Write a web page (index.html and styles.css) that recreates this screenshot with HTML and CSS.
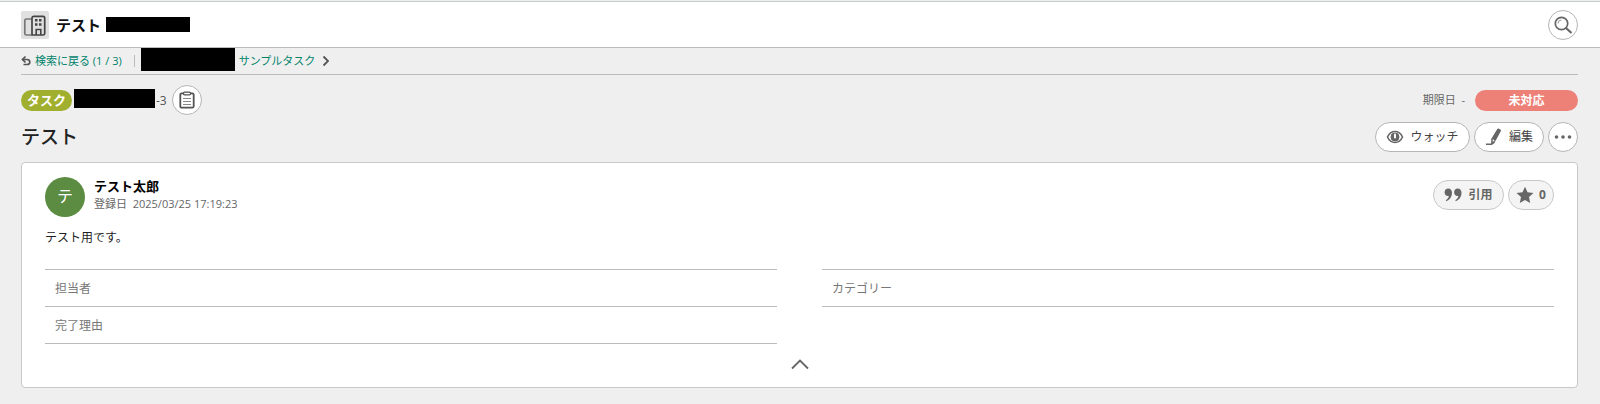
FILE: index.html
```
<!DOCTYPE html>
<html lang="ja">
<head>
  <meta charset="utf-8">
  <title>テスト</title>
  <link rel="stylesheet" href="styles.css">
</head>
<body>
  <header class="header">
    <svg class="project-icon" viewBox="0 0 28 28">
      <path d="M10.500 8H5.500q-1.700 0-1.700 1.500v13q0 1.500 1.700 1.500h5" fill="none" stroke="#777" stroke-width="1.700"/>
      <path d="M11 24V7q0-1.700 1.500-1.700h9.500q1.700 0 1.700 1.700v15.500q0 1.500-1.700 1.500z" fill="none" stroke="#444" stroke-width="1.700"/>
      <path d="M14 8h2.500v2.500h-2.500zM18 8h2.500v2.500h-2.500zM14 12.200h2.500v2.500h-2.500zM18 12.200h2.500v2.500h-2.500z" fill="#444"/>
      <path d="M15.200 24v-5.500h4.600v5.500" fill="none" stroke="#444" stroke-width="1.600"/>
    </svg>
    <span class="project-name">テスト</span>
    <span class="mask mask-project"></span>
    <button class="round-button header-search" aria-label="検索">
      <svg width="20" height="20" viewBox="0 0 20 20" fill="none" stroke="#666">
        <circle cx="8.500" cy="8.500" r="6.200" stroke-width="1.700"/>
        <path d="M5 8.500q0-3.500 3.500-3.500" stroke="#999"/>
        <path d="M13 13l5.500 5" stroke-width="2.200"/>
      </svg>
    </button>
  </header>

  <main class="content">
    <nav class="breadcrumb">
      <svg width="10" height="12" viewBox="0 0 10 12" fill="none" stroke="#555" stroke-width="1.700">
        <path d="M1.500 4.500h4.500q2.800 0 2.800 2.500T6 9.500H2.500"/>
        <path d="M4.500 1.500L1.500 4.500l3 3"/>
      </svg>
      <a class="back-link" href="#">検索に戻る (1 / 3)</a>
      <span class="divider"></span>
      <span class="mask mask-crumb"></span>
      <a class="next-link" href="#">サンプルタスク</a>
      <svg width="8" height="12" viewBox="0 0 8 12" fill="none" stroke="#555" stroke-width="1.800">
        <path d="M1.500 1.500L6 6l-4.500 4.500"/>
      </svg>
    </nav>

    <div class="issue-row">
      <span class="issue-type">タスク</span>
      <span class="mask mask-key"></span>
      <span class="issue-key">-3</span>
      <button class="round-button" aria-label="コピー">
        <svg width="18" height="18" viewBox="0 0 18 18" fill="none" stroke="#555">
          <rect x="2.300" y="2.300" width="13.400" height="14.400" rx="1.500" stroke-width="1.800"/>
          <rect x="5.500" y="1.200" width="7" height="2.600" rx="1" fill="#fff" stroke-width="1.300"/>
          <path d="M5 7.500h8M5 10.500h8M5 13.500h8" stroke="#888"/>
        </svg>
      </button>
      <span class="due-date">期限日&nbsp; -</span>
      <span class="status">未対応</span>
    </div>

    <div class="title-row">
      <h1 class="issue-title">テスト</h1>
      <button class="pill-button watch">
        <svg width="18" height="14" viewBox="0 0 18 14" fill="none" stroke="#666">
          <path d="M1.500 7q2.500-5.500 7.500-5.500T16.500 7q-2.500 5.500-7.500 5.500T1.500 7z" stroke-width="1.600"/>
          <circle cx="9" cy="7" r="4" fill="#666"/>
          <path d="M9 4.500v3" stroke="#fff" stroke-width="2" stroke-linecap="round"/>
        </svg>
        ウォッチ
      </button>
      <button class="pill-button edit">
        <svg width="18" height="18" viewBox="0 0 18 18">
          <path d="M12.300 1q.5-.8 1.300-.4l2 1.200q.8.500.3 1.300L10.500 13l-4.300 3.200L6.200 11z" fill="#666"/>
          <path d="M1 16.200h5.500l3-2.200" fill="none" stroke="#666" stroke-width="1.600"/>
          <path d="M7.800 11.200l1.800 1-1.900 1.700z" fill="#fff"/>
        </svg>
        編集
      </button>
      <button class="round-button" aria-label="その他">
        <svg width="18" height="6" viewBox="0 0 18 6" fill="#666">
          <circle cx="2.500" cy="3" r="1.800"/><circle cx="9" cy="3" r="1.800"/><circle cx="15.500" cy="3" r="1.800"/>
        </svg>
      </button>
    </div>

    <section class="card">
      <div class="card-head">
        <span class="avatar">テ</span>
        <div class="author">
          <div class="author-name">テスト太郎</div>
          <div class="created">登録日&nbsp; 2025/03/25 17:19:23</div>
        </div>
        <button class="pill-button soft quote">
          <svg width="18" height="14" viewBox="0 0 18 14" fill="#666">
            <path d="M4.200.5C6.500.5 8 2.200 8 4.800c0 4-2.200 7-5.600 8.400l-.6-.9C3.700 11 4.700 9.600 4.800 8 2.300 8.400.6 6.700.6 4.300.6 2.100 2.200.5 4.200.5z"/>
            <path d="M13.700.5c2.300 0 3.800 1.700 3.800 4.300 0 4-2.200 7-5.600 8.400l-.6-.9c1.900-1.300 2.900-2.700 3-4.300-2.500.4-4.200-1.300-4.200-3.700 0-2.200 1.600-3.800 3.600-3.800z"/>
          </svg>
          引用
        </button>
        <button class="pill-button soft star">
          <svg width="18" height="18" viewBox="0 0 18 18" fill="#666">
            <path d="M9 .8l2.500 5.500 6 .7-4.500 4.100 1.200 6L9 14.100l-5.200 3 1.200-6L.5 7l6-.7z"/>
          </svg>
          0
        </button>
      </div>

      <p class="description">テスト用です。</p>

      <div class="fields">
        <dl class="field-list">
          <div class="field"><dt>担当者</dt><dd></dd></div>
          <div class="field"><dt>完了理由</dt><dd></dd></div>
        </dl>
        <dl class="field-list">
          <div class="field"><dt>カテゴリー</dt><dd></dd></div>
        </dl>
      </div>

      <button class="collapse" aria-label="閉じる">
        <svg width="18" height="12" viewBox="0 0 18 12" fill="none" stroke="#666" stroke-width="1.800">
          <path d="M1 10.500l8-8 8 8"/>
        </svg>
      </button>
    </section>
  </main>
</body>
</html>
```
FILE: styles.css
```
* {
  box-sizing: border-box;
}

body {
  margin: 0;
  background: #efefef;
  color: #222;
  font-family: "Open Sans", "Noto Sans CJK JP", sans-serif;
  font-size: 12px;
  line-height: 18px;
}

button {
  font: inherit;
  color: inherit;
  cursor: pointer;
}

svg {
  flex: none;
}

a {
  color: #00836b;
  text-decoration: none;
}

a:hover {
  text-decoration: underline;
}

/* Header */
.header {
  display: flex;
  align-items: center;
  height: 47px;
  margin-top: 1px;
  padding: 0 22px 0 21px;
  background: #fff;
  border-top: 1px solid #c5cbc9;
  border-bottom: 1px solid #bbb;
}

.project-icon {
  width: 28px;
  height: 28px;
  margin-right: 7px;
  background: #e0e0e0;
  border-radius: 2px;
}

.project-name {
  color: #111;
  font-size: 15px;
  font-weight: bold;
}

.header-search {
  margin-left: auto;
}

/* Blacked out names */
.mask {
  flex: none;
  background: #000;
}

.mask-project {
  width: 84px;
  height: 15px;
  margin-left: 5px;
}

.mask-crumb {
  width: 94px;
  height: 23px;
  margin: 0 4px 3px 0;
}

.mask-key {
  width: 81px;
  height: 19px;
  margin: 0 1px 3px 2px;
}

/* Buttons */
.round-button,
.pill-button {
  display: flex;
  flex: none;
  align-items: center;
  justify-content: center;
  height: 30px;
  padding: 0;
  background: #fff;
  border: 1px solid #b5b5b5;
  border-radius: 15px;
}

.round-button {
  width: 30px;
}

.pill-button {
  gap: 6px;
  color: #444;
}

.soft {
  background: #f4f4f4;
  border-color: #c8c8c8;
  color: #666;
  font-weight: bold;
}

.watch {
  width: 95px;
}

.edit {
  width: 70px;
}

.quote {
  width: 71px;
}

.star {
  width: 46px;
  gap: 5px;
}

/* Content */
.content {
  padding: 0 22px 16px 21px;
}

.breadcrumb {
  display: flex;
  align-items: center;
  height: 27px;
  border-bottom: 1px solid #bbb;
  font-size: 11px;
}

.back-link {
  margin-left: 4px;
}

.divider {
  width: 1px;
  height: 12px;
  margin: 0 6px 0 12px;
  background: #bbb;
}

.next-link {
  margin-right: 7px;
}

.issue-row {
  display: flex;
  align-items: center;
  margin-top: 10px;
}

.issue-type,
.status {
  height: 21px;
  line-height: 21px;
  border-radius: 11px;
  color: #fff;
  text-align: center;
  font-weight: bold;
}

.issue-type {
  width: 51px;
  background: #a1af2f;
  font-size: 13px;
}

.issue-key {
  margin: 2px 5px 0 0;
  color: #555;
}

.due-date {
  margin-left: auto;
  color: #666;
  font-size: 11px;
}

.status {
  width: 103px;
  margin-left: 10px;
  background: #ed8077;
}

.title-row {
  display: flex;
  align-items: center;
  gap: 4px;
  margin-top: 7px;
}

.issue-title {
  flex: 1;
  margin: 0;
  font-size: 19px;
  font-weight: 500;
  line-height: 28px;
}

/* Card */
.card {
  margin-top: 10px;
  padding: 14px 23px 11px;
  background: #fff;
  border: 1px solid #c8c8c8;
  border-radius: 4px;
}

.card-head {
  display: flex;
  align-items: center;
  gap: 4px;
}

.avatar {
  width: 40px;
  height: 40px;
  border-radius: 50%;
  background: #5b8c42;
  color: #fff;
  font-size: 16px;
  line-height: 38px;
  text-align: center;
}

.author {
  flex: 1;
  margin: 0 0 4px 5px;
}

.author-name {
  color: #000;
  font-size: 13px;
  font-weight: bold;
}

.created {
  color: #666;
  font-size: 11px;
}

.card-head .pill-button {
  margin-bottom: 4px;
}

.description {
  margin: 12px 0 22px;
}

.fields {
  display: flex;
  align-items: flex-start;
  gap: 45px;
}

.field-list {
  flex: 1;
  margin: 0;
  border-top: 1px solid #bbb;
}

.field {
  display: flex;
  padding: 10px 10px 8px;
  border-bottom: 1px solid #bbb;
  color: #777;
}

.field dd {
  margin: 0;
}

.collapse {
  display: block;
  height: 20px;
  margin: 12px auto 0;
  padding: 0;
  background: none;
  border: 0;
}
```
